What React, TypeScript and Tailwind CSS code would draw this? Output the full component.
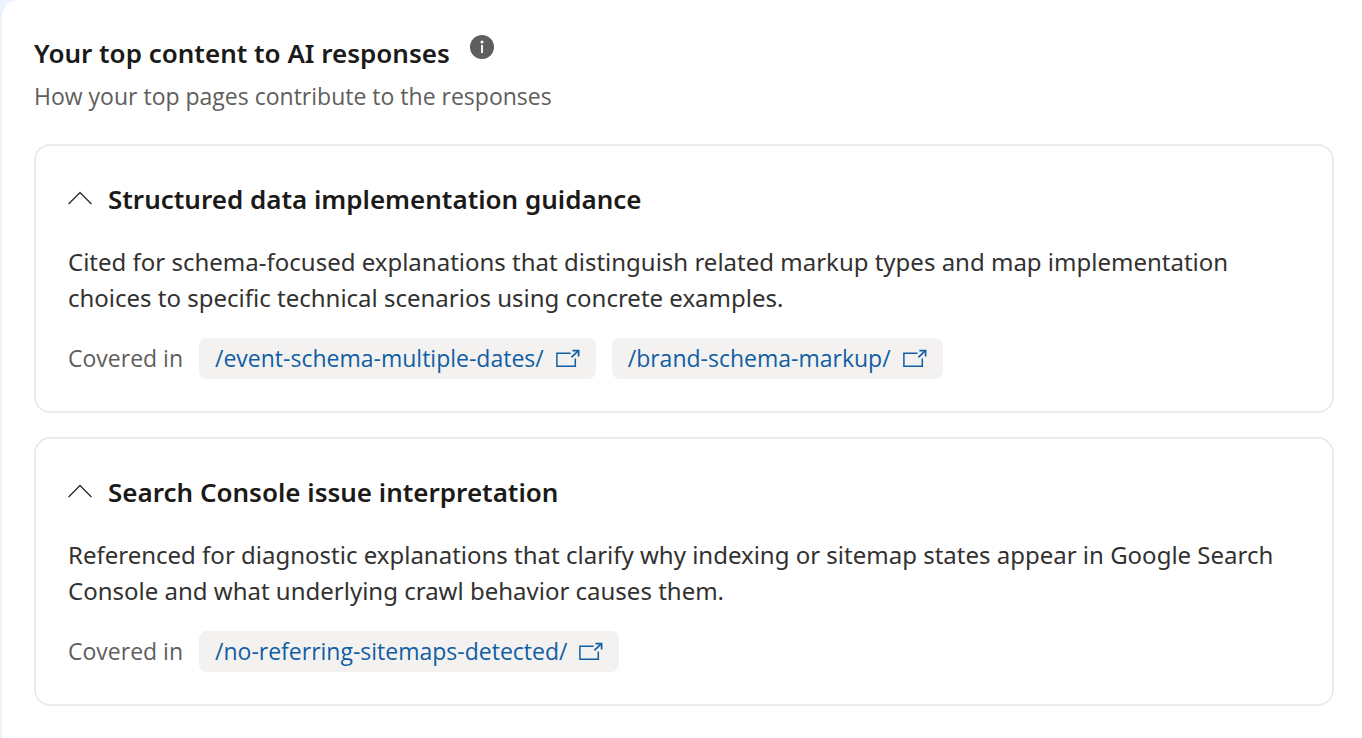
import React, { useState } from 'react';

interface Topic {
  id: string;
  title: string;
  summary: string;
  pages: string[];
}

const TOPICS: Topic[] = [
  {
    id: 'structured-data',
    title: 'Structured data implementation guidance',
    summary:
      'Cited for schema-focused explanations that distinguish related markup types and map implementation choices to specific technical scenarios using concrete examples.',
    pages: ['/event-schema-multiple-dates/', '/brand-schema-markup/'],
  },
  {
    id: 'search-console',
    title: 'Search Console issue interpretation',
    summary:
      'Referenced for diagnostic explanations that clarify why indexing or sitemap states appear in Google Search Console and what underlying crawl behavior causes them.',
    pages: ['/no-referring-sitemaps-detected/'],
  },
];

const InfoIcon: React.FC = () => (
  <svg viewBox="0 0 24 24" className="w-6 h-6" aria-hidden="true">
    <circle cx="12" cy="12" r="12" fill="#605e5c" />
    <circle cx="12" cy="7" r="1.5" fill="#fff" />
    <path d="M12 10v8" stroke="#fff" strokeWidth="1.9" />
  </svg>
);

const ChevronIcon: React.FC<{ open: boolean }> = ({ open }) => (
  <svg
    viewBox="0 0 24 16"
    className={open ? 'w-6 h-4 shrink-0' : 'w-6 h-4 shrink-0 rotate-180'}
    fill="none"
    stroke="#323130"
    strokeWidth="1.4"
    aria-hidden="true"
  >
    <path d="M0.6 12.9 12 1.5 23.4 12.9" />
  </svg>
);

const OpenIcon: React.FC = () => (
  <svg
    viewBox="0 0 24 20"
    className="w-6 h-5 shrink-0"
    fill="none"
    stroke="currentColor"
    strokeWidth="1.5"
    aria-hidden="true"
  >
    <path d="M14.6 4.3H0.9v12.9h18.4V9.6" />
    <path d="M15.4 8.4 22.4 1.7" strokeWidth="1.7" />
    <path d="M16.4 1.6h6.2v6" strokeWidth="1.7" />
  </svg>
);

const TopicCard: React.FC<{ topic: Topic }> = ({ topic }) => {
  const [open, setOpen] = useState(true);

  return (
    <section className="border-2 border-[#ebebeb] rounded-2xl p-8">
      <h3 className="text-[26px] leading-[42px] font-semibold text-[#1b1a19]">
        <button
          type="button"
          aria-expanded={open}
          aria-controls={topic.id}
          onClick={() => setOpen(!open)}
          className="flex items-center gap-4 text-left cursor-pointer"
        >
          <ChevronIcon open={open} />
          {topic.title}
        </button>
      </h3>

      {open && (
        <div id={topic.id}>
          <p className="mt-6 text-2xl leading-9 text-[#323130]">{topic.summary}</p>
          <div className="mt-[22px] flex flex-wrap items-center gap-4 font-['Open_Sans',sans-serif] text-[23px] leading-[41px]">
            <span className="text-[#605e5c]">Covered in</span>
            {topic.pages.map(page => (
              <a
                key={page}
                href={page}
                className="flex items-center gap-3 rounded-lg bg-[#f3f2f1] px-4 text-[#115ea3] hover:underline"
              >
                {page}
                <OpenIcon />
              </a>
            ))}
          </div>
        </div>
      )}
    </section>
  );
};

const App: React.FC = () => (
  <div className="bg-[#ebf3fc] pl-0.5 font-['Noto_Sans','Open_Sans',sans-serif]">
    <main className="min-h-screen rounded-tl-2xl bg-white pl-8 pr-7 pt-8 pb-8">
      {/* Heading */}
      <div className="flex items-start gap-5">
        <h2 className="text-[26px] leading-[42px] font-semibold text-[#1b1a19]">
          Your top content to AI responses
        </h2>
        <button type="button" aria-label="More information" className="mt-[3px] cursor-pointer">
          <InfoIcon />
        </button>
      </div>
      <p className="mt-1 font-['Open_Sans',sans-serif] text-[23px] leading-9 text-[#605e5c]">
        How your top pages contribute to the responses
      </p>

      {/* Topics */}
      <div className="mt-[30px] flex flex-col gap-6">
        {TOPICS.map(topic => (
          <TopicCard key={topic.id} topic={topic} />
        ))}
      </div>
    </main>
  </div>
);

export default App;
